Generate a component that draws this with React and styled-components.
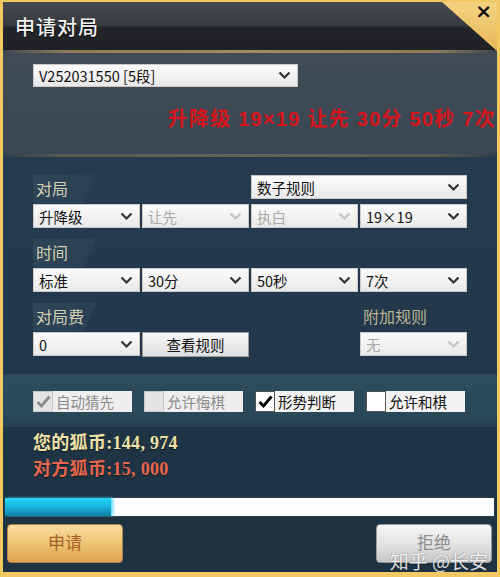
import React from "react";
import styled, { createGlobalStyle, css } from "styled-components";

const Global = createGlobalStyle`
  html, body { margin: 0; padding: 0; background: #1d3140; }
  body { font-family: "Noto Sans CJK SC", "Noto Sans", sans-serif; }
  * { box-sizing: border-box; }
`;

const Frame = styled.div`
  position: relative;
  width: 500px;
  height: 577px;
  border: 3px solid #f1c862;
  border-top-width: 2px;
  border-bottom-width: 5px;
  display: flex;
  flex-direction: column;
  background: #1d3140;
  overflow: hidden;
`;

const TitleBar = styled.div`
  height: 48px;
  flex: none;
  display: flex;
  align-items: center;
  padding-left: 12px;
  background: linear-gradient(
    to bottom,
    #474a50 0%,
    #36393e 50%,
    #232529 52%,
    #1f2125 100%
  );
`;

const Title = styled.h1`
  margin: 0;
  font-size: 20px;
  font-weight: 500;
  color: #f2f2f2;
  letter-spacing: 1px;
  text-shadow: 0 1px 1px #000;
`;

const Corner = styled.div`
  position: absolute;
  top: 0;
  right: 0;
  width: 55px;
  height: 49px;
  background: linear-gradient(to bottom, #f4d283, #e8b857);
  clip-path: polygon(0 0, 100% 0, 100% 100%);
`;

const CloseX = styled.span`
  position: absolute;
  top: -3px;
  right: 5px;
  font-family: "DejaVu Sans", sans-serif;
  font-size: 20px;
  font-weight: 700;
  color: #111;
`;

const Divider = styled.div`
  height: 3px;
  flex: none;
  background: linear-gradient(
    to right,
    #3d4750 0%,
    #8c7b5c 12%,
    #a08c66 50%,
    #8c7b5c 88%,
    #3d4750 100%
  );
  opacity: ${(p) => (p.$dim ? 0.55 : 1)};
`;

const TopPanel = styled.section`
  height: 101px;
  flex: none;
  padding: 11px 0 0 30px;
  background: linear-gradient(to bottom, #404b55, #3c4853 60%, #3a4651);
  display: flex;
  flex-direction: column;
`;

const Summary = styled.div`
  margin-top: 16px;
  align-self: flex-end;
  padding-right: 1px;
  font-family: "Liberation Sans", "Noto Sans CJK SC", sans-serif;
  font-size: 20px;
  font-weight: 700;
  letter-spacing: 1.25px;
  color: #d8141c;
  white-space: nowrap;
`;

const SelectBox = styled.div`
  height: ${(p) => p.$h || 24}px;
  width: ${(p) => (p.$w ? `${p.$w}px` : "auto")};
  display: flex;
  align-items: center;
  justify-content: space-between;
  padding: 0 6px 0 5px;
  font-size: 14.5px;
  background: linear-gradient(to bottom, #fbfbfb, #e9e9e9);
  border: 1px solid #c9c9c9;
  color: ${(p) => (p.$disabled ? "#a8a8a8" : "#111")};
  white-space: nowrap;
  ${(p) =>
    p.$span &&
    css`
      grid-column: span ${p.$span};
    `}
`;

const Chevron = ({ disabled }) => (
  <svg width="13" height="9" viewBox="0 0 13 9">
    <path
      d="M1.5 1.5 L6.5 6.5 L11.5 1.5"
      fill="none"
      stroke={disabled ? "#c4c4c4" : "#333"}
      strokeWidth="2.2"
    />
  </svg>
);

const Select = ({ value, disabled, ...rest }) => (
  <SelectBox $disabled={disabled} {...rest}>
    <span>{value}</span>
    <Chevron disabled={disabled} />
  </SelectBox>
);

const MidPanel = styled.section`
  height: 217px;
  flex: none;
  padding: 18px 0 0 30px;
  background: linear-gradient(to bottom, #263b4d, #22374a);
`;

const Grid = styled.div`
  display: grid;
  grid-template-columns: repeat(4, 107px);
  column-gap: 2px;
  align-items: start;
  margin-top: ${(p) => p.$top || 0}px;
`;

const LabelTab = styled.div`
  grid-column: span ${(p) => p.$span || 1};
  height: 28px;
  display: flex;
  align-items: center;
  padding-left: 3px;
  padding-bottom: 2px;
  font-size: 16px;
  color: ${(p) => (p.$muted ? "#b9b294" : "#d6d0b4")};
  background: ${(p) =>
    p.$tab
      ? "linear-gradient(115deg, #2f4558 0%, #2a4053 60%, rgba(40,60,78,0) 62%)"
      : "transparent"};
  width: ${(p) => (p.$tab ? "92px" : "auto")};
`;

const Row = styled(Grid)`
  margin-top: 1px;
  align-items: stretch;
`;

const RuleButton = styled.button`
  height: 25px;
  font-family: inherit;
  font-size: 14.5px;
  color: #111;
  background: linear-gradient(to bottom, #f8f8f8, #dedede);
  border: 1px solid #9a9a9a;
  padding: 0;
  cursor: pointer;
`;

const Spacer = styled.div``;

const OptionPanel = styled.section`
  height: 53px;
  flex: none;
  padding: 15px 0 0 30px;
  border-top: 2px solid #2f4b5b;
  background: linear-gradient(to bottom, #2c4c5c, #2a4959 70%, #274252);
  display: flex;
  gap: 12px;
`;

const Option = styled.label`
  width: 99px;
  height: 21px;
  display: flex;
  align-items: center;
  gap: 3px;
  background: ${(p) => (p.$disabled ? "#eeeeee" : "#f2f2f2")};
  font-size: 14.5px;
  color: ${(p) => (p.$disabled ? "#8c8c8c" : "#111")};
`;

const Box = styled.span`
  width: 20px;
  height: 21px;
  flex: none;
  display: flex;
  align-items: center;
  justify-content: center;
  background: ${(p) => (p.$disabled ? "#e4e4e4" : "#fff")};
  border: 1px solid ${(p) => (p.$disabled ? "#c8c8c8" : "#555")};
`;

const Tick = ({ color }) => (
  <svg width="15" height="13" viewBox="0 0 15 13">
    <path
      d="M1.5 7 L5.5 11 L13.5 1.5"
      fill="none"
      stroke={color}
      strokeWidth="2.8"
    />
  </svg>
);

const Check = ({ label, checked, disabled }) => (
  <Option $disabled={disabled}>
    <Box $disabled={disabled}>
      {checked && <Tick color={disabled ? "#8a8a8a" : "#000"} />}
    </Box>
    <span>{label}</span>
  </Option>
);

const CoinPanel = styled.section`
  height: 70px;
  flex: none;
  padding: 6px 0 0 30px;
  background: linear-gradient(to bottom, #1f3546, #1e3343);
  display: flex;
  flex-direction: column;
  gap: 6px;
`;

const Coin = styled.div`
  font-family: "Liberation Serif", "Noto Sans CJK SC", serif;
  font-weight: 700;
  font-size: 18px;
  line-height: 20px;
  letter-spacing: 0.3px;
  color: ${(p) => p.$color};
  text-shadow: 0 1px 1px rgba(0, 0, 0, 0.5);
`;

const Progress = styled.div`
  height: 20px;
  flex: none;
  margin: 0 2px 0 1px;
  background: #fdfdfd;
  border: 1px solid #2a3d4a;
`;

const ProgressFill = styled.div`
  height: 100%;
  background: linear-gradient(to bottom, #24d6f6 0%, #18b8e0 45%, #0b7fa6 100%);
  box-shadow: 2px 0 3px rgba(40, 210, 250, 0.8);
`;

const Footer = styled.footer`
  flex: 1;
  display: flex;
  justify-content: space-between;
  align-items: flex-start;
  padding: 7px 5px 0 4px;
  background: #1e3241;
  position: relative;
`;

const ActionButton = styled.button`
  width: 116px;
  height: 39px;
  border-radius: 4px;
  font-family: inherit;
  font-size: 17px;
  padding: 0 0 4px;
  cursor: pointer;
  ${(p) =>
    p.$primary
      ? css`
          color: #a35f26;
          background: linear-gradient(to bottom, #f9dca0, #ecc071 55%, #dca452);
          border: 1px solid #b48445;
        `
      : css`
          color: #8e8e8e;
          background: linear-gradient(to bottom, #f6f6f6, #e2e2e2 55%, #c6c6c6);
          border: 1px solid #9a9a9a;
        `}
`;

const Watermark = styled.span`
  position: absolute;
  right: 9px;
  bottom: -1px;
  font-size: 19px;
  line-height: 24px;
  color: rgba(255, 255, 255, 0.85);
  text-shadow: 0 0 2px rgba(0, 0, 0, 0.4);
  pointer-events: none;
`;

const progress = 106 / 491;

export default function App() {
  return (
    <>
      <Global />
      <Frame>
        <TitleBar>
          <Title>申请对局</Title>
        </TitleBar>
        <Corner>
          <CloseX>×</CloseX>
        </Corner>
        <Divider />
        <TopPanel>
          <Select value="V252031550 [5段]" $w={265} $h={23} />
          <Summary>升降级 19×19 让先 30分 50秒 7次</Summary>
        </TopPanel>
        <Divider $dim />
        <MidPanel>
          <Grid>
            <LabelTab $tab>对局</LabelTab>
            <Spacer />
            <Select value="数子规则" $span={2} />
          </Grid>
          <Row>
            <Select value="升降级" />
            <Select value="让先" disabled />
            <Select value="执白" disabled />
            <Select value="19×19" />
          </Row>
          <Grid $top={11}>
            <LabelTab $tab>时间</LabelTab>
          </Grid>
          <Row>
            <Select value="标准" />
            <Select value="30分" />
            <Select value="50秒" />
            <Select value="7次" />
          </Row>
          <Grid $top={11}>
            <LabelTab $tab>对局费</LabelTab>
            <Spacer />
            <Spacer />
            <LabelTab $muted>附加规则</LabelTab>
          </Grid>
          <Row>
            <Select value="0" />
            <RuleButton>查看规则</RuleButton>
            <Spacer />
            <Select value="无" disabled />
          </Row>
        </MidPanel>
        <OptionPanel>
          <Check label="自动猜先" checked disabled />
          <Check label="允许悔棋" disabled />
          <Check label="形势判断" checked />
          <Check label="允许和棋" />
        </OptionPanel>
        <CoinPanel>
          <Coin $color="#f1e1a6">您的狐币:144, 974</Coin>
          <Coin $color="#e8664c">对方狐币:15, 000</Coin>
        </CoinPanel>
        <Progress>
          <ProgressFill style={{ width: `${progress * 100}%` }} />
        </Progress>
        <Footer>
          <ActionButton $primary>申请</ActionButton>
          <ActionButton>拒绝</ActionButton>
          <Watermark>知乎 @长安</Watermark>
        </Footer>
      </Frame>
    </>
  );
}
